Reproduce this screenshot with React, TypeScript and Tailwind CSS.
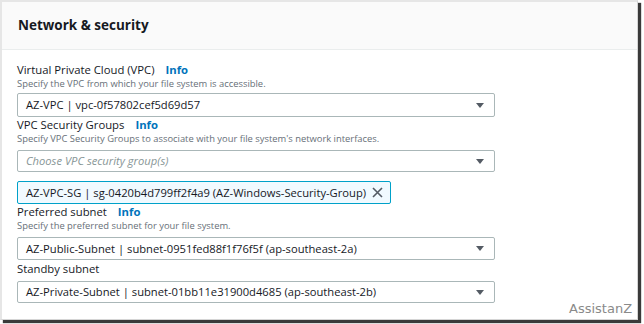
import React from "react";

function Caret() {
  return (
    <svg width="8" height="5" viewBox="0 0 8 5" className="shrink-0">
      <path d="M0 0 H8 L4 5 Z" fill="#545b64" />
    </svg>
  );
}

function Select({ text, placeholder, h }: { text: string; placeholder?: boolean; h: string }) {
  return (
    <div
      className={`w-[478px] ${h} border border-[#aab7b8] rounded-[2px] bg-white flex items-center justify-between pl-[8px] pr-[10px]`}
    >
      <span
        className={
          placeholder
            ? "text-[11.2px] italic text-[#879596] leading-none"
            : "text-[11.2px] text-[#16191f] leading-none"
        }
      >
        {text}
      </span>
      <Caret />
    </div>
  );
}

function Label({ text, info }: { text: string; info?: boolean }) {
  return (
    <div className="h-[14px] flex items-center text-[11.3px] leading-none text-[#16191f]">
      <span>{text}</span>
      {info && <span className="ml-[11px] font-bold text-[#0073bb]">Info</span>}
    </div>
  );
}

function Desc({ text }: { text: string }) {
  return <div className="h-[13px] flex items-center text-[9.4px] leading-none text-[#687078]">{text}</div>;
}

export default function App() {
  return (
    <div className="w-[644px] h-[324px] bg-white relative font-['Open_Sans',sans-serif]">
      <div className="w-[638px] h-[320px] border-l-2 border-t-2 border-r border-b border-l-[#e6e6e6] border-t-[#e6e6e6] border-r-[#d5d5d5] border-b-[#d5d5d5] bg-white shadow-[3px_3px_1px_#3a3a3a] flex flex-col">
        <div className="h-[48px] bg-[#fafafa] border-b border-[#eaeded] flex items-center pl-[16px]">
          <span className="text-[13.5px] font-bold text-[#16191f] leading-none">Network &amp; security</span>
        </div>
        <div className="flex flex-col pl-[15px] pt-[13px]">
          <Label text="Virtual Private Cloud (VPC)" info />
          <Desc text="Specify the VPC from which your file system is accessible." />
          <div className="mt-[3px]">
            <Select h="h-[24px]" text="AZ-VPC | vpc-0f57802cef5d69d57" />
          </div>
          <div className="mt-[1px]">
            <Label text="VPC Security Groups" info />
          </div>
          <Desc text="Specify VPC Security Groups to associate with your file system's network interfaces." />
          <div className="mt-[5px]">
            <Select h="h-[22px]" placeholder text="Choose VPC security group(s)" />
          </div>
          <div className="mt-[9px] w-[374px] h-[23px] border border-[#00a1c9] bg-[#f1faff] rounded-[2px] flex items-center justify-between pl-[8px] pr-[7px]">
            <span className="text-[11.2px] text-[#16191f] leading-none whitespace-nowrap">
              AZ-VPC-SG | sg-0420b4d799ff2f4a9 (AZ-Windows-Security-Group)
            </span>
            <svg width="11" height="11" viewBox="0 0 11 11" className="shrink-0">
              <path d="M1 1 L10 10 M10 1 L1 10" stroke="#545b64" strokeWidth="1.6" />
            </svg>
          </div>
          <div className="mt-[1px]">
            <Label text="Preferred subnet" info />
          </div>
          <Desc text="Specify the preferred subnet for your file system." />
          <div className="mt-[5px]">
            <Select h="h-[23px]" text="AZ-Public-Subnet | subnet-0951fed88f1f76f5f (ap-southeast-2a)" />
          </div>
          <div className="mt-[2px]">
            <Label text="Standby subnet" />
          </div>
          <div className="mt-[5px]">
            <Select h="h-[22px]" text="AZ-Private-Subnet | subnet-01bb11e31900d4685 (ap-southeast-2b)" />
          </div>
        </div>
      </div>
      <div className="absolute left-[569px] top-[302px] text-[13px] leading-none text-[#8a8a8a] font-['DejaVu_Sans',sans-serif]">
        AssistanZ
      </div>
    </div>
  );
}
